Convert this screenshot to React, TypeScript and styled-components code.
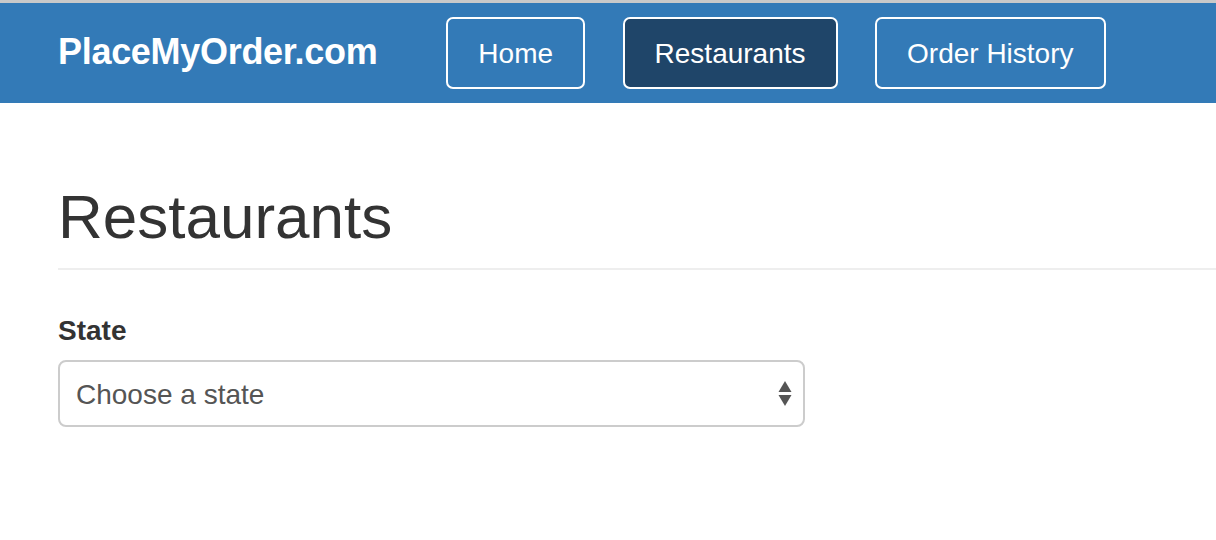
import React from "react";
import styled, { createGlobalStyle } from "styled-components";

const GlobalStyle = createGlobalStyle`
  html, body { margin: 0; padding: 0; background: #fff; }
  body { font-family: "Liberation Sans", Arial, Helvetica, sans-serif; color: #333; }
  * { box-sizing: border-box; }
`;

const Page = styled.div`
  width: 1216px;
  min-height: 540px;
  overflow: hidden;
`;

const NavBar = styled.nav`
  height: 103px;
  border-top: 3px solid #c9c9c9;
  background: #337ab7;
  display: flex;
  align-items: center;
  padding-left: 58px;
`;

const Brand = styled.a`
  color: #fff;
  font-size: 36px;
  font-weight: 700;
  text-decoration: none;
  letter-spacing: -0.3px;
  margin-top: -2px;
`;

const NavList = styled.ul`
  list-style: none;
  margin: 0 0 0 69px;
  padding: 0;
  display: flex;
  gap: 37.5px;
`;

const NavButton = styled.a<{ $active?: boolean }>`
  display: flex;
  align-items: center;
  height: 72px;
  padding: 1px 30px 0;
  border: 2px solid #fff;
  border-radius: 7px;
  color: #fff;
  font-size: 28px;
  text-decoration: none;
  background: ${(p) => (p.$active ? "#1f4569" : "transparent")};
`;

const Content = styled.main`
  padding-left: 58px;
`;

const Header = styled.div`
  margin-top: 80px;
  padding-bottom: 18px;
  border-bottom: 2px solid #eee;
`;

const Title = styled.h1`
  margin: 0;
  font-size: 62px;
  font-weight: 400;
  line-height: 67px;
  color: #333;
`;

const FormGroup = styled.div`
  margin-top: 44px;
  display: flex;
  flex-direction: column;
  gap: 12px;
`;

const Label = styled.label`
  font-size: 28px;
  font-weight: 700;
  line-height: 34px;
  color: #333;
`;

const SelectWrap = styled.div`
  position: relative;
  width: 747px;
`;

const Select = styled.select`
  appearance: none;
  -webkit-appearance: none;
  width: 100%;
  height: 67px;
  border: 2px solid #ccc;
  border-radius: 8px;
  background: #fff;
  padding: 2px 16px 0;
  font-family: "Liberation Sans", Arial, Helvetica, sans-serif;
  font-size: 28px;
  color: #555;
  outline: none;
`;

const Arrows = styled.svg`
  position: absolute;
  right: 13px;
  top: 21px;
  pointer-events: none;
`;

export default function App() {
  return (
    <Page>
      <GlobalStyle />
      <NavBar>
        <Brand href="#">PlaceMyOrder.com</Brand>
        <NavList>
          <li><NavButton href="#">Home</NavButton></li>
          <li><NavButton href="#" $active>Restaurants</NavButton></li>
          <li><NavButton href="#">Order History</NavButton></li>
        </NavList>
      </NavBar>
      <Content>
        <Header>
          <Title>Restaurants</Title>
        </Header>
        <FormGroup>
          <Label htmlFor="state">State</Label>
          <SelectWrap>
            <Select id="state" defaultValue="">
              <option value="">Choose a state</option>
            </Select>
            <Arrows width="14" height="25" viewBox="0 0 14 25">
              <polygon points="7,0 13.5,11 0.5,11" fill="#555" />
              <polygon points="0.5,14 13.5,14 7,25" fill="#555" />
            </Arrows>
          </SelectWrap>
        </FormGroup>
      </Content>
    </Page>
  );
}
